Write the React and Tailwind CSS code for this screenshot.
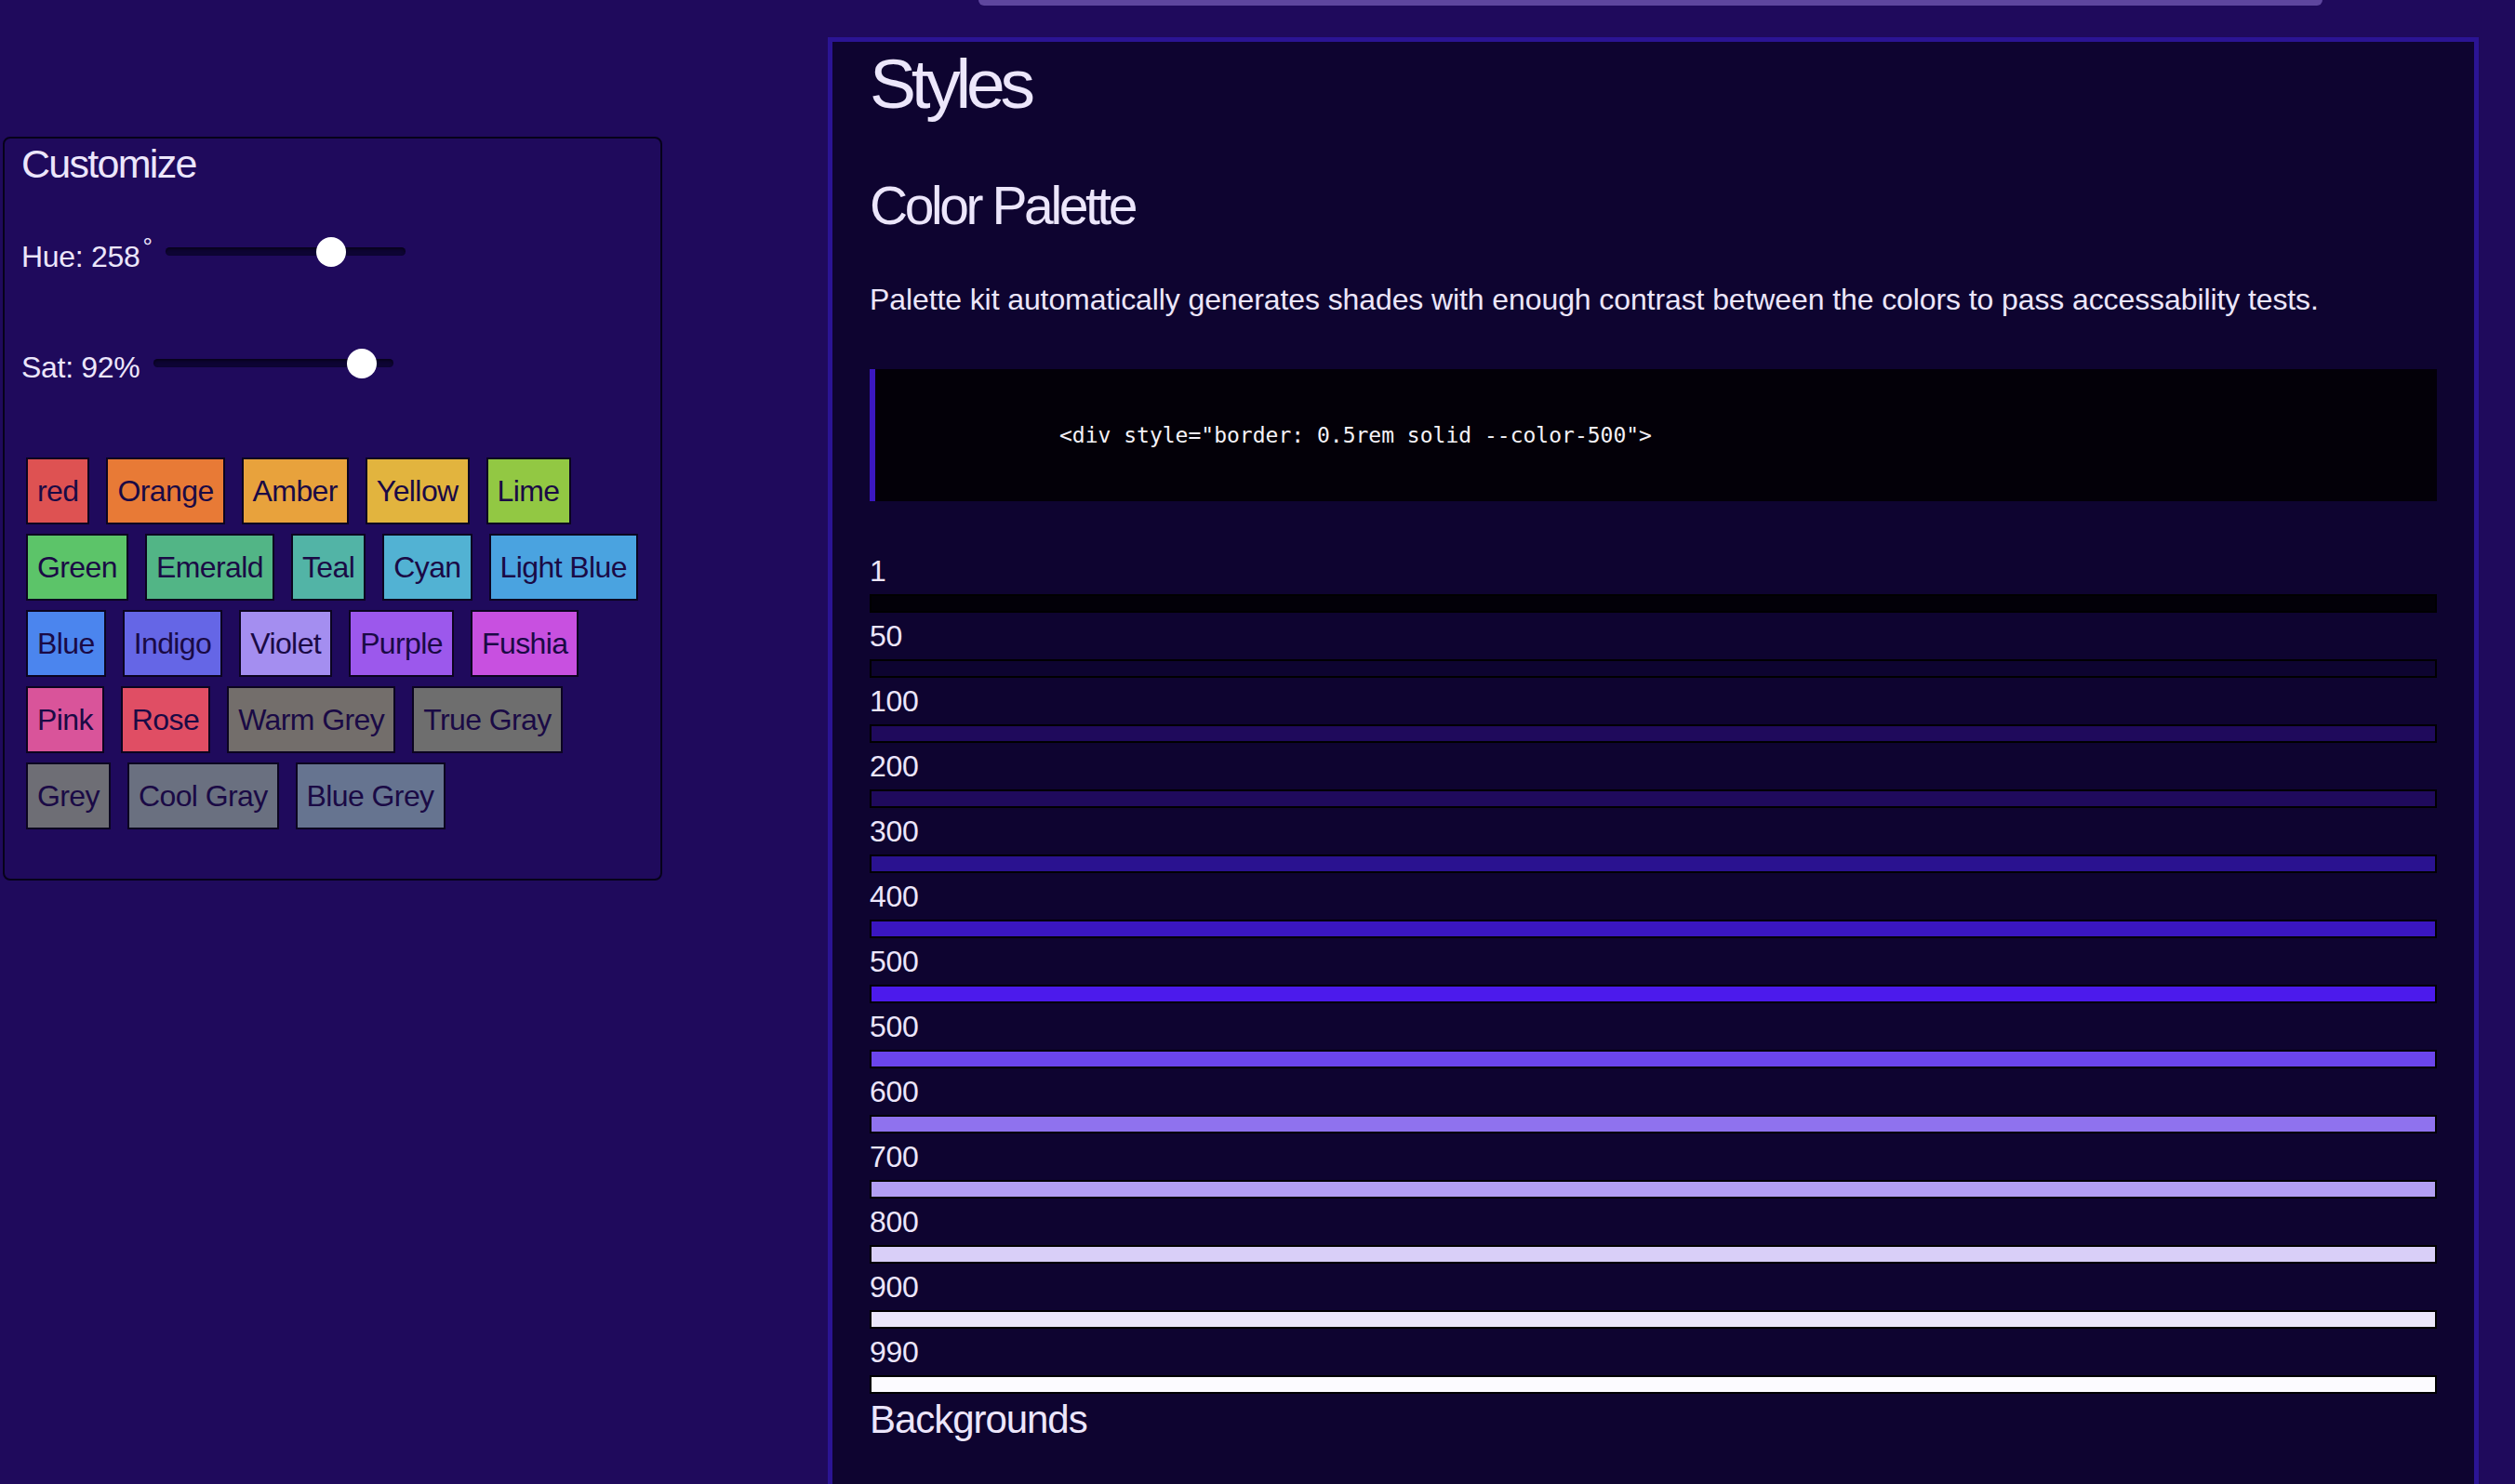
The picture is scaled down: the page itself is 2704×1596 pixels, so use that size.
import React from "react";

const swatchRows = [
  [
    ["red", "#de5252"],
    ["Orange", "#e87a36"],
    ["Amber", "#e8a23c"],
    ["Yellow", "#e2b43e"],
    ["Lime", "#92c843"],
  ],
  [
    ["Green", "#5cc469"],
    ["Emerald", "#52b586"],
    ["Teal", "#52b4a6"],
    ["Cyan", "#52b2d3"],
    ["Light Blue", "#4aa3e0"],
  ],
  [
    ["Blue", "#4b85ee"],
    ["Indigo", "#6566e6"],
    ["Violet", "#a48ef0"],
    ["Purple", "#9c58ec"],
    ["Fushia", "#c850e0"],
  ],
  [
    ["Pink", "#d9549a"],
    ["Rose", "#e04e64"],
    ["Warm Grey", "#736e6b"],
    ["True Gray", "#6e6e6e"],
  ],
  [
    ["Grey", "#6e6e75"],
    ["Cool Gray", "#6a7080"],
    ["Blue Grey", "#667490"],
  ],
];

const shades = [
  ["1", "#020008"],
  ["50", "#0d0430"],
  ["100", "#1f0a5c"],
  ["200", "#1f0a5c"],
  ["300", "#2a1290"],
  ["400", "#3a16c0"],
  ["500", "#4c1aec"],
  ["500", "#6b45ec"],
  ["600", "#8f72ee"],
  ["700", "#b39ff2"],
  ["800", "#d9cff8"],
  ["900", "#ebe7fa"],
  ["990", "#fcfbff"],
];

const Slider = ({ value, max }) => {
  // thumb travels 226px (258 track - 32 thumb)
  const left = Math.round((value / max) * 226);
  return (
    <div className="relative w-[258px] h-[9px] rounded-full bg-[#0d0433] shadow-[inset_0_2px_3px_rgba(0,0,0,0.5)]">
      <div
        className="absolute top-[-11px] w-[32px] h-[32px] rounded-full bg-white"
        style={{ left }}
      />
    </div>
  );
};

const Customize = () => {
  return (
    <div className="ml-[3px] mt-[147px] w-[709px] h-[800px] shrink-0 rounded-[8px] border-2 border-[#06021a] bg-[#1f0a5c] pl-[18px] pt-[6px]">
      <h2 className="text-[43px] leading-[43px] tracking-[-0.04em] text-[#ece6fb]">Customize</h2>

      <div className="mt-[62px] flex items-start gap-[14px]">
        <span className="text-[32px] leading-[32px] tracking-[-0.3px] text-[#ece6fb]">
          Hue: 258<span className="inline-block align-top text-[26px] leading-[26px] relative top-[-8px] ml-[3px]">°</span>
        </span>
        <div className="mt-[6px]">
          <Slider value={258} max={360} />
        </div>
      </div>

      <div className="mt-[87px] flex items-start gap-[15px]">
        <span className="text-[32px] leading-[32px] tracking-[-0.3px] text-[#ece6fb]">Sat: 92%</span>
        <div className="mt-[7px]">
          <Slider value={92} max={100} />
        </div>
      </div>

      <div className="mt-[81px] ml-[5px] flex flex-col gap-[10px]">
        {swatchRows.map((row, i) => (
          <div key={i} className="flex gap-[18px]">
            {row.map(([name, color]) => (
              <button
                key={name}
                className="h-[72px] flex items-center px-[10px] border-2 border-[#0b0420] text-[32px] leading-[32px] tracking-[-0.6px] text-[#1a0a45]"
                style={{ backgroundColor: color }}
              >
                {name}
              </button>
            ))}
          </div>
        ))}
      </div>
    </div>
  );
};

const Styles = () => {
  return (
    <div className="ml-[178px] w-[1775px] shrink-0">
      <div className="ml-[162px] w-[1445px] h-[6px] rounded-b-[10px] bg-[#5e469e]" />
      <div className="mt-[34px] border-[5px] border-[#2b1494] bg-[#0e0430] px-[40px] pt-[8px] pb-[200px] text-[#ece6fb]">
        <h1 className="text-[75px] leading-[75px] tracking-[-0.07em]">Styles</h1>
        <h2 className="mt-[65px] text-[57px] leading-[57px] tracking-[-0.06em]">Color Palette</h2>
        <p className="mt-[56px] text-[32px] leading-[32px] tracking-[-0.1px]">
          Palette kit automatically generates shades with enough contrast between the colors to pass accessability tests.
        </p>

        <div className="mt-[59px] h-[142px] flex items-center border-l-[6px] border-[#3b17c0] bg-[#030008] pl-[198px]">
          <code className="font-['DejaVu_Sans_Mono',monospace] text-[23px] text-[#f4f2f8]">
            {'<div style="border: 0.5rem solid --color-500">'}
          </code>
        </div>

        <div className="mt-[50px]">
          {shades.map(([label, color], i) => (
            <div key={i}>
              <div className="text-[32px] leading-[50px] tracking-[-0.3px]">{label}</div>
              <div className="h-[20px] w-full border-2 border-black" style={{ backgroundColor: color }} />
            </div>
          ))}
        </div>

        <h3 className="mt-[7px] text-[42px] leading-[42px] tracking-[-0.025em]">Backgrounds</h3>
      </div>
    </div>
  );
};

export default function App() {
  return (
    <div className="min-h-screen w-full overflow-hidden bg-[#1f0a5c] font-['Liberation_Sans',Arial,sans-serif] flex items-start">
      <Customize />
      <Styles />
    </div>
  );
}
